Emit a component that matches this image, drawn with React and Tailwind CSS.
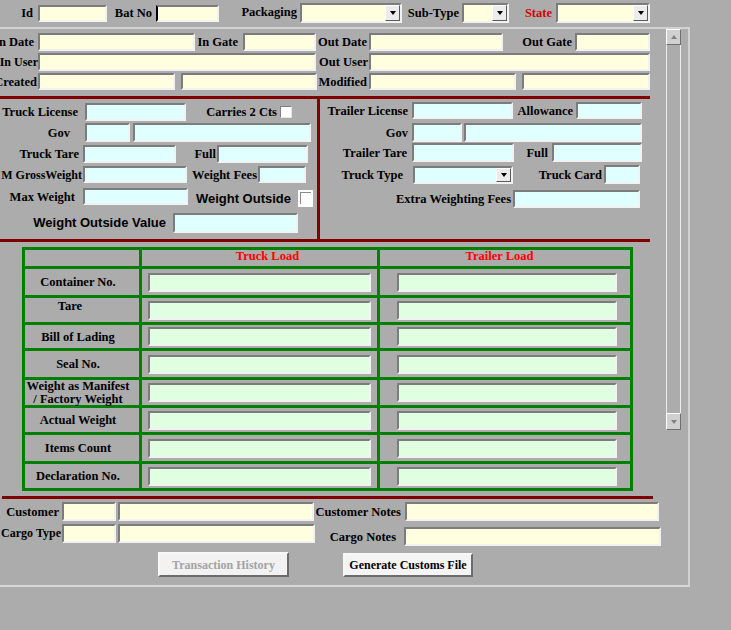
import React from 'react';

const In = ({ c = '', bg = 'bg-[#ffffe0]' }) => (
  <input
    type="text"
    readOnly
    className={`block shrink-0 border-2 border-t-[#7c7c7c] border-l-[#7c7c7c] border-b-[#f2f2f2] border-r-[#f2f2f2] outline-none ${bg} ${c}`}
  />
);

const Lb = ({ c = '', children }) => (
  <span className={`flex shrink-0 items-center justify-end whitespace-nowrap leading-[14px] ${c}`}>{children}</span>
);

const Sel = ({ c = '', bg = 'bg-[#ffffe0]' }) => (
  <span className={`flex shrink-0 border-2 border-t-[#7c7c7c] border-l-[#7c7c7c] border-b-[#f2f2f2] border-r-[#f2f2f2] ${bg} ${c}`}>
    <span className="flex-1" />
    <span className="flex w-[15px] items-center justify-center border border-t-white border-l-white border-b-[#5a5a5a] border-r-[#5a5a5a] bg-[#ececec]">
      <span className="h-0 w-0 border-t-[4px] border-r-[3.5px] border-l-[3.5px] border-t-black border-r-transparent border-l-transparent" />
    </span>
  </span>
);

const Chk = () => (
  <span className="block h-[12px] w-[12px] shrink-0 border border-t-[#808080] border-l-[#808080] border-b-[#e4e4e4] border-r-[#e4e4e4] bg-white" />
);

const cyan = 'bg-[#e0ffff]';
const green = 'bg-[#e0ffe0]';

const tableRows = [
  { label: 'Container No.' },
  { label: 'Tare', top: true },
  { label: 'Bill of Lading' },
  { label: 'Seal No.' },
  { label: 'Weight as Manifest / Factory Weight', two: true },
  { label: 'Actual Weight' },
  { label: 'Items Count' },
  { label: 'Declaration No.' },
];

export default function App() {
  return (
    <div className="h-[630px] w-[731px] overflow-hidden bg-[#acacac] font-['Liberation_Serif','Times_New_Roman',serif] text-[12.5px] font-bold text-black">
      {/* top filter row */}
      <div className="mt-[3px] flex h-[20px] items-center">
        <Lb c="w-[38px] pr-[5px]">Id</Lb>
        <In c="w-[69px] h-[17px]" />
        <Lb c="w-[49px] pr-[4px]">Bat No</Lb>
        <In c="w-[63px] h-[17px] border-l-black" />
        <Lb c="w-[81px] pr-[3px] self-start pt-[2px]">Packaging</Lb>
        <Sel c="w-[102px] h-[20px]" />
        <Lb c="w-[60px] pr-[3px]">Sub-Type</Lb>
        <Sel c="w-[47px] h-[20px]" />
        <Lb c="w-[47px] pr-[4px] text-[#d40000]">State</Lb>
        <Sel c="w-[94px] h-[20px]" />
      </div>

      {/* main panel */}
      <div className="mt-[4px] flex w-[690px] border-t-2 border-r-2 border-b-2 border-t-[#d2d2d2] border-r-[#d2d2d2] border-b-[#d6d6d6]">
        <div className="w-[666px] shrink-0 pb-[8px]">
          <div className="mt-[4px] flex h-[18px] items-center">
            <Lb c="w-[38px] pr-[4px]">In Date</Lb>
            <In c="w-[157px] h-[18px]" />
            <Lb c="w-[48px] pr-[5px]">In Gate</Lb>
            <In c="w-[73px] h-[18px]" />
            <Lb c="w-[53px] pr-[2px]">Out Date</Lb>
            <In c="w-[134px] h-[18px]" />
            <Lb c="w-[72px] pr-[3px]">Out Gate</Lb>
            <In c="w-[75px] h-[18px]" />
          </div>
          <div className="mt-[2px] flex h-[18px] items-center">
            <Lb c="w-[38px] text-[12px]">In User</Lb>
            <In c="w-[278px] h-[18px]" />
            <Lb c="w-[53px] pr-[1px]">Out User</Lb>
            <In c="w-[281px] h-[18px]" />
          </div>
          <div className="mt-[2px] flex h-[17px] items-center">
            <Lb c="w-[38px] pr-[1px]">Created</Lb>
            <In c="w-[137px] h-[17px]" />
            <span className="w-[6px] shrink-0" />
            <In c="w-[136px] h-[17px]" />
            <Lb c="w-[52px] pr-[2px]">Modified</Lb>
            <In c="w-[147px] h-[17px]" />
            <span className="w-[6px] shrink-0" />
            <In c="w-[128px] h-[17px]" />
          </div>

          <div className="mt-[6px] h-[3px] w-[650px] bg-[#800000]" />

          {/* truck / trailer */}
          <div className="flex h-[140px] w-[650px]">
            <div className="w-[317px] shrink-0">
              <div className="mt-[4px] flex h-[18px] items-center">
                <Lb c="w-[85px] pr-[7px]">Truck License</Lb>
                <In c="w-[101px] h-[18px]" bg={cyan} />
                <Lb c="w-[94px] pr-[3px]">Carries 2 Cts</Lb>
                <Chk />
              </div>
              <div className="mt-[2px] flex h-[19px] items-center">
                <Lb c="w-[85px] pr-[15px]">Gov</Lb>
                <In c="w-[45px] h-[19px]" bg={cyan} />
                <span className="w-[3px] shrink-0" />
                <In c="w-[178px] h-[19px]" bg={cyan} />
              </div>
              <div className="mt-[3px] flex h-[18px] items-center">
                <Lb c="w-[83px] pr-[4px]">Truck Tare</Lb>
                <In c="w-[93px] h-[18px]" bg={cyan} />
                <Lb c="w-[41px] pr-[1px]">Full</Lb>
                <In c="w-[91px] h-[18px]" bg={cyan} />
              </div>
              <div className="mt-[3px] flex h-[17px] items-center">
                <Lb c="w-[83px] pr-[1px] text-[12px]">M GrossWeight</Lb>
                <In c="w-[104px] h-[17px]" bg={cyan} />
                <Lb c="w-[71px] pr-[1px]">Weight Fees</Lb>
                <In c="w-[48px] h-[17px]" bg={cyan} />
              </div>
              <div className="mt-[5px] flex h-[17px] items-center">
                <Lb c="w-[83px] pr-[8px]">Max Weight</Lb>
                <In c="w-[105px] h-[17px]" bg={cyan} />
                <Lb c="w-[110px] pr-[7px] pt-[5px] font-['Liberation_Sans',Arial,sans-serif] text-[13px]">Weight Outside</Lb>
                <span className="mt-[3px] flex h-[17px] w-[15px] shrink-0 items-center justify-center bg-white">
                  <span className="block h-[12px] w-[11px] border-t border-l border-t-[#8a8a8a] border-l-[#8a8a8a]" />
                </span>
              </div>
              <div className="mt-[8px] flex h-[20px] items-center">
                <Lb c="w-[173px] pr-[7px] font-['Liberation_Sans',Arial,sans-serif] text-[13px]">Weight Outside Value</Lb>
                <In c="w-[125px] h-[20px]" bg={cyan} />
              </div>
            </div>

            <div className="w-[3px] shrink-0 bg-[#800000]" />

            <div className="w-[330px] shrink-0">
              <div className="mt-[3px] flex h-[17px] items-center">
                <Lb c="w-[92px] pr-[4px]">Trailer License</Lb>
                <In c="w-[101px] h-[17px]" bg={cyan} />
                <Lb c="w-[63px] pr-[3px]">Allowance</Lb>
                <In c="w-[66px] h-[17px]" bg={cyan} />
              </div>
              <div className="mt-[4px] flex h-[19px] items-center">
                <Lb c="w-[92px] pr-[4px]">Gov</Lb>
                <In c="w-[50px] h-[19px]" bg={cyan} />
                <span className="w-[2px] shrink-0" />
                <In c="w-[178px] h-[19px]" bg={cyan} />
              </div>
              <div className="mt-[1px] flex h-[19px] items-center">
                <Lb c="w-[92px] pr-[5px]">Trailer Tare</Lb>
                <In c="w-[102px] h-[19px]" bg={cyan} />
                <Lb c="w-[38px] pr-[4px]">Full</Lb>
                <In c="w-[90px] h-[19px]" bg={cyan} />
              </div>
              <div className="mt-[3px] flex h-[19px] items-center">
                <Lb c="w-[93px] pr-[10px]">Truck Type</Lb>
                <Sel c="w-[100px] h-[18px]" bg={cyan} />
                <Lb c="w-[91px] pr-[2px]">Truck Card</Lb>
                <In c="w-[36px] h-[19px]" bg={cyan} />
              </div>
              <div className="mt-[6px] flex h-[18px] items-center">
                <Lb c="w-[193px] pr-[2px]">Extra Weighting Fees</Lb>
                <In c="w-[127px] h-[18px]" bg={cyan} />
              </div>
            </div>
          </div>

          <div className="h-[3px] w-[650px] bg-[#800000]" />

          {/* load table */}
          <div className="ml-[22px] mt-[5px] grid w-[611px] grid-cols-[114px_235px_250px] grid-rows-[16px_26px_24px_23px_26px_25px_24px_26px_24px] gap-[3px] bg-[#008000] p-[3px]">
            <div className="bg-[#acacac]" />
            <div className="flex items-start justify-center bg-[#acacac] pl-[16px] leading-[12px] text-[#ff0000]">Truck Load</div>
            <div className="flex items-start justify-center bg-[#acacac] pr-[11px] leading-[12px] text-[#ff0000]">Trailer Load</div>
            {tableRows.map((r) => (
              <React.Fragment key={r.label}>
                <div
                  className={`flex justify-center bg-[#acacac] text-center ${
                    r.top ? 'items-start pt-[1px] pr-[24px]' : 'items-center pr-[8px]'
                  } ${r.two ? 'leading-[12.5px] pr-[4px]' : 'leading-[14px]'}`}
                >
                  {r.two ? (
                    <span>
                      Weight as Manifest
                      <br />/ Factory Weight
                    </span>
                  ) : (
                    r.label
                  )}
                </div>
                <div className="flex items-center justify-center bg-[#acacac]">
                  <In c="w-[223px] h-[19px]" bg={green} />
                </div>
                <div className="flex items-center justify-center bg-[#acacac] pl-[4px]">
                  <In c="w-[220px] h-[19px]" bg={green} />
                </div>
              </React.Fragment>
            ))}
          </div>

          <div className="ml-[2px] mt-[5px] h-[3px] w-[651px] bg-[#800000]" />

          {/* customer / cargo */}
          <div className="mt-[3px] flex h-[19px] items-center">
            <Lb c="w-[62px] pr-[3px]">Customer</Lb>
            <In c="w-[54px] h-[19px]" />
            <span className="w-[2px] shrink-0" />
            <In c="w-[196px] h-[19px]" />
            <Lb c="w-[91px] pr-[4px]">Customer Notes</Lb>
            <In c="w-[254px] h-[19px]" />
          </div>
          <div className="mt-[3px] flex h-[22px] items-start">
            <Lb c="w-[62px] h-[17px] pr-[1px] text-[12px]">Cargo Type</Lb>
            <In c="w-[54px] h-[19px]" />
            <span className="w-[2px] shrink-0" />
            <In c="w-[197px] h-[19px]" />
            <Lb c="w-[89px] pr-[8px] h-[22px] pt-[3px]">Cargo Notes</Lb>
            <In c="w-[257px] h-[19px] mt-[3px]" />
          </div>

          <div className="mt-[6px] flex h-[25px] items-start">
            <span className="w-[158px] shrink-0" />
            <button
              type="button"
              disabled
              className="h-[25px] w-[131px] shrink-0 border-2 border-t-[#f8f8f8] border-l-[#f8f8f8] border-b-[#6c6c6c] border-r-[#6c6c6c] bg-[#f2f2f2] text-[12px] font-bold text-[#a3a3a3]"
            >
              Transaction History
            </button>
            <span className="w-[54px] shrink-0" />
            <button
              type="button"
              className="mt-[1px] h-[24px] w-[130px] shrink-0 border-2 border-t-[#f8f8f8] border-l-[#f8f8f8] border-b-[#6c6c6c] border-r-[#6c6c6c] bg-[#f4f4f4] text-[12px] font-bold text-black"
            >
              Generate Customs File
            </button>
          </div>
        </div>

        {/* scrollbar */}
        <div className="flex h-[401px] w-[15px] shrink-0 flex-col">
          <div className="flex h-[16px] items-center justify-center border border-t-white border-l-white border-b-[#707070] border-r-[#707070] bg-[#d0d0d0]">
            <span className="h-0 w-0 border-b-[4px] border-r-[3.5px] border-l-[3.5px] border-b-[#808080] border-r-transparent border-l-transparent" />
          </div>
          <div className="flex-1 border-l border-r border-l-[#ececec] border-r-[#ececec]" />
          <div className="flex h-[17px] items-center justify-center border border-t-white border-l-white border-b-[#707070] border-r-[#707070] bg-[#d0d0d0]">
            <span className="h-0 w-0 border-t-[4px] border-r-[3.5px] border-l-[3.5px] border-t-[#808080] border-r-transparent border-l-transparent" />
          </div>
        </div>
        <div className="w-[7px] shrink-0" />
      </div>
    </div>
  );
}
